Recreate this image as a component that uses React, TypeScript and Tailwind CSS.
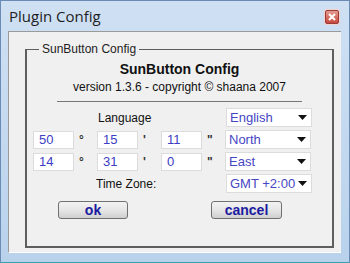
import React from "react";

const font = { fontFamily: '"Liberation Sans", Arial, sans-serif' };

function Field({ value, sep }: { value: string; sep: string }) {
  return (
    <div className="flex items-center">
      <div className="w-[41px] h-[18px] bg-white border border-[#dcdcdc] pl-[5px] leading-[16px] text-[13px] text-[#3c3cc4]">
        {value}
      </div>
      <span className="w-[23px] pl-[5px] text-[12px] font-bold text-[#333]">{sep}</span>
    </div>
  );
}

function Combo({ value }: { value: string }) {
  return (
    <div className="w-[86px] h-[19px] bg-white border border-[#dcdcdc] flex items-center justify-between pl-[3px] pr-[4px]">
      <span className="text-[13px] leading-[17px] text-[#4646c4]">{value}</span>
      <svg width="9" height="5" viewBox="0 0 9 5">
        <path d="M0 0h9L4.5 5z" fill="#111" />
      </svg>
    </div>
  );
}

function Btn({ label, w }: { label: string; w: string }) {
  return (
    <button
      className={`${w} h-[18px] rounded-[3px] border border-[#707070] bg-gradient-to-b from-[#f2f2f2] via-[#e6e6e6] to-[#cfcfcf] text-[14px] leading-[14px] font-bold text-[#1b1ba0]`}
    >
      {label}
    </button>
  );
}

export default function App() {
  return (
    <div
      style={font}
      className="w-[350px] h-[263px] flex flex-col bg-gradient-to-b from-[#cfe0f3] to-[#b9d2ec] border border-[#6a8bb3] border-b-[#3aa0b0] overflow-hidden"
    >
      {/* Title bar */}
      <div className="h-[30px] flex items-center justify-between pl-[8px] pr-[10px]">
        <span className="text-[15px] text-[#1e1e1e]" style={{ fontFamily: '"Open Sans", "Noto Sans", sans-serif' }}>
          Plugin Config
        </span>
        <div className="w-[14px] h-[14px] mt-[2px] rounded-[2px] border border-[#9a3d36] bg-gradient-to-b from-[#e39a8f] to-[#c5473c] flex items-center justify-center shadow-[0_0_0_1px_#f3d2cd]">
          <svg width="8" height="8" viewBox="0 0 8 8">
            <path d="M1 1l6 6M7 1L1 7" stroke="#fff" strokeWidth="2" />
          </svg>
        </div>
      </div>

      {/* Client area */}
      <div className="flex-1 ml-[7px] mr-[8px] mb-[9px] bg-[#f0f0f0] border-l border-t border-[#9a9a9a] border-b border-b-white">
        <fieldset className="ml-[16px] mr-[7px] mt-[10px] h-[206px] border-l-2 border-r-2 border-b-2 border-t border-[#5e5e5e] px-[6px]">
          <legend className="ml-[6px] px-[3px] text-[12px] text-[#1e1e1e] leading-[14px]">SunButton Config</legend>
          <div className="flex flex-col items-center text-[#111]">
            <div className="mt-[5px] text-[14px] font-bold leading-[16px]">SunButton Config</div>
            <div className="mt-[3px] text-[12px] leading-[14px]">version 1.3.6 - copyright © shaana 2007</div>
            <div className="mt-[7px] w-[245px] h-px bg-[#777]" />
          </div>

          <div className="mt-[6px] flex flex-col gap-[3px]">
            <div className="flex items-center">
              <span className="w-[193px] pl-[65px] text-[12px] text-[#111]">Language</span>
              <Combo value="English" />
            </div>
            <div className="flex items-center">
              <Field value="50" sep="°" />
              <Field value="15" sep="'" />
              <Field value="11" sep='"' />
              <Combo value="North" />
            </div>
            <div className="flex items-center">
              <Field value="14" sep="°" />
              <Field value="31" sep="'" />
              <Field value="0" sep='"' />
              <Combo value="East" />
            </div>
            <div className="flex items-center">
              <span className="w-[193px] pl-[63px] text-[12px] text-[#111]">Time Zone:</span>
              <Combo value="GMT +2:00" />
            </div>
          </div>

          <div className="mt-[8px] flex pl-[25px] gap-[83px]">
            <Btn label="ok" w="w-[70px]" />
            <Btn label="cancel" w="w-[71px]" />
          </div>
        </fieldset>
      </div>
    </div>
  );
}
